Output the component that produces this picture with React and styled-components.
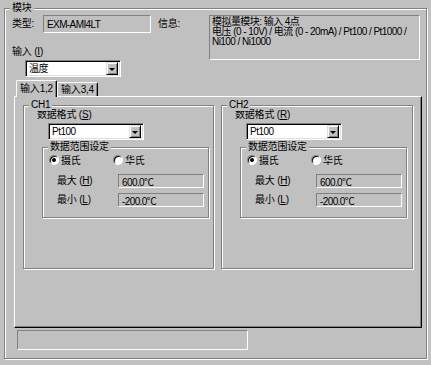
import styled, { createGlobalStyle } from "styled-components";

const GlobalStyle = createGlobalStyle`
  html, body {
    margin: 0;
    padding: 0;
    background: #c0c0c0;
  }
  body {
    font-family: "Liberation Sans", "Noto Sans CJK SC", sans-serif;
    font-size: 10px;
    letter-spacing: -0.2px;
    color: #000;
  }
  * {
    box-sizing: border-box;
  }
`;

const Dialog = styled.div`
  width: 431px;
  height: 365px;
  padding: 8px 0 0 4px;
  background: #c0c0c0;
  overflow: hidden;
`;

// etched group frame (gray line + white line)
const Group = styled.div`
  width: ${(p) => p.$w}px;
  height: ${(p) => (p.$h ? `${p.$h}px` : "auto")};
  margin: ${(p) => p.$m || "0"};
  border: 1px solid #808080;
  box-shadow: inset 1px 1px #fff, 1px 1px #fff;
  flex-shrink: 0;
`;

const Legend = styled.div`
  width: fit-content;
  height: 12px;
  line-height: 12px;
  margin: -7px 0 0 5px;
  padding: 0 2px;
  background: #c0c0c0;
  position: relative;
  white-space: nowrap;
`;

const TopArea = styled.div`
  display: flex;
  height: 45px;
  margin-top: 1px;
  padding-left: 7px;
`;

const LeftCol = styled.div`
  width: 197px;
  display: flex;
  flex-direction: column;
`;

const TypeRow = styled.div`
  display: flex;
  align-items: center;
  height: 18px;
`;

const Label = styled.span`
  display: inline-block;
  width: ${(p) => (p.$w ? `${p.$w}px` : "auto")};
  margin-left: ${(p) => p.$ml || 0}px;
  line-height: 12px;
  white-space: nowrap;

  u {
    text-decoration: underline;
  }
`;

const Sunken = styled.div`
  width: ${(p) => p.$w}px;
  height: ${(p) => p.$h}px;
  border: 1px solid;
  border-color: #808080 #fff #fff #808080;
  background: #c0c0c0;
  padding-left: 3px;
  display: flex;
  align-items: center;
  white-space: nowrap;
  letter-spacing: -0.6px;
  flex-shrink: 0;
`;

const InputLabel = styled.div`
  margin-top: 13px;
  line-height: 12px;
`;

const InfoBox = styled.div`
  width: 211px;
  height: 45px;
  border: 1px solid;
  border-color: #808080 #fff #fff #808080;
  padding: 1px 2px;
  line-height: 10px;
  letter-spacing: -0.55px;
  white-space: nowrap;
`;

const ComboWrap = styled.div`
  margin: ${(p) => p.$m};
`;

const ComboBox = styled.div`
  width: ${(p) => p.$w}px;
  height: 17px;
  background: #fff;
  border: 1px solid;
  border-color: #808080 #fff #fff #808080;
  box-shadow: inset 1px 1px #000, inset -1px -1px #dfdfdf;
  padding: 2px;
  display: flex;
  align-items: center;
  justify-content: space-between;
`;

const ComboText = styled.span`
  padding-left: 1px;
  line-height: 12px;
  letter-spacing: -0.5px;
`;

const DropButton = styled.span`
  width: 12px;
  height: 13px;
  background: #c0c0c0;
  border: 1px solid;
  border-color: #dfdfdf #000 #000 #dfdfdf;
  box-shadow: inset 1px 1px #fff, inset -1px -1px #808080;
  display: flex;
  align-items: center;
  justify-content: center;

  &::after {
    content: "";
    border-left: 3px solid transparent;
    border-right: 3px solid transparent;
    border-top: 3px solid #000;
    margin-top: 1px;
  }
`;

const TabStrip = styled.div`
  display: flex;
  align-items: flex-end;
  height: 16px;
  margin: 3px 0 0 11px;
`;

const Tab = styled.div`
  position: relative;
  z-index: ${(p) => (p.$active ? 1 : 0)};
  width: 41px;
  height: ${(p) => (p.$active ? 17 : 14)}px;
  margin-bottom: ${(p) => (p.$active ? -1 : 0)}px;
  background: #c0c0c0;
  border-top: 1px solid #fff;
  border-left: 1px solid #fff;
  border-right: 1px solid #000;
  border-radius: 2px 2px 0 0;
  box-shadow: inset -1px 0 #808080;
  display: flex;
  align-items: center;
  justify-content: center;
  line-height: 12px;
  white-space: nowrap;
  padding-bottom: ${(p) => (p.$active ? 1 : 0)}px;
`;

const TabPanel = styled.div`
  width: 408px;
  height: 232px;
  margin-left: 9px;
  border: 1px solid;
  border-color: #fff #000 #000 #fff;
  box-shadow: inset -1px -1px #808080;
  display: flex;
  align-items: flex-start;
  gap: 7px;
  padding: 8px 0 0 8px;
`;

const FormatLabel = styled.div`
  margin: -2px 0 0 13px;
  line-height: 12px;
`;

const RadioRow = styled.div`
  display: flex;
  align-items: center;
  height: 13px;
  padding-left: 6px;
`;

const RadioItem = styled.label`
  display: flex;
  align-items: center;
  gap: 2px;
  width: ${(p) => (p.$w ? `${p.$w}px` : "auto")};
`;

const RadioCircle = styled.span`
  width: 10px;
  height: 10px;
  border-radius: 50%;
  background: #fff;
  border: 1px solid;
  border-color: #808080 #fff #fff #808080;
  box-shadow: inset 1px 1px #000;
  display: flex;
  align-items: center;
  justify-content: center;

  &::after {
    content: "";
    width: 4px;
    height: 4px;
    border-radius: 50%;
    background: ${(p) => (p.$checked ? "#000" : "transparent")};
  }
`;

const ValueRow = styled.div`
  display: flex;
  align-items: center;
  height: 14px;
  margin-top: ${(p) => p.$mt}px;
  padding-left: 14px;
`;

const StatusBox = styled.div`
  width: 231px;
  height: 20px;
  margin: 2px 0 0 12px;
  border: 1px solid;
  border-color: #808080 #fff #fff #808080;
`;

const OuterBody = styled.div`
  padding-bottom: 8px;
`;

function Combo({ value, width, margin }) {
  return (
    <ComboWrap $m={margin}>
      <ComboBox $w={width}>
        <ComboText>{value}</ComboText>
        <DropButton />
      </ComboBox>
    </ComboWrap>
  );
}

function Channel({ name, hotkey, width }) {
  return (
    <Group $w={width} $h={164}>
      <Legend>{name}</Legend>
      <FormatLabel>
        数据格式 (<u>{hotkey}</u>)
      </FormatLabel>
      <Combo value="Pt100" width={96} margin="2px 0 0 24px" />
      <Group $w={167} $h={71} $m="7px 0 0 18px">
        <Legend>数据范围设定</Legend>
        <RadioRow>
          <RadioItem $w={64}>
            <RadioCircle $checked />
            摄氏
          </RadioItem>
          <RadioItem>
            <RadioCircle />
            华氏
          </RadioItem>
        </RadioRow>
        <ValueRow $mt={8}>
          <Label $w={61}>
            最大 (<u>H</u>)
          </Label>
          <Sunken $w={86} $h={14}>
            600.0℃
          </Sunken>
        </ValueRow>
        <ValueRow $mt={5}>
          <Label $w={61}>
            最小 (<u>L</u>)
          </Label>
          <Sunken $w={86} $h={14}>
            -200.0℃
          </Sunken>
        </ValueRow>
      </Group>
    </Group>
  );
}

export default function App() {
  return (
    <>
      <GlobalStyle />
      <Dialog>
        <Group $w={423}>
          <Legend>模块</Legend>
          <OuterBody>
            <TopArea>
              <LeftCol>
                <TypeRow>
                  <Label $w={31}>类型:</Label>
                  <Sunken $w={108} $h={18}>
                    EXM-AMI4LT
                  </Sunken>
                  <Label $ml={7}>信息:</Label>
                </TypeRow>
                <InputLabel>
                  输入 (<u>I</u>)
                </InputLabel>
              </LeftCol>
              <InfoBox>
                模拟量模块: 输入 4点
                <br />
                电压 (0 - 10V) / 电流 (0 - 20mA) / Pt100 / Pt1000 /
                <br />
                Ni100 / Ni1000
              </InfoBox>
            </TopArea>
            <Combo value="温度" width={96} margin="0 0 0 20px" />
            <TabStrip>
              <Tab $active>输入1,2</Tab>
              <Tab>输入3,4</Tab>
            </TabStrip>
            <TabPanel>
              <Channel name="CH1" hotkey="S" width={191} />
              <Channel name="CH2" hotkey="R" width={192} />
            </TabPanel>
            <StatusBox />
          </OuterBody>
        </Group>
      </Dialog>
    </>
  );
}
